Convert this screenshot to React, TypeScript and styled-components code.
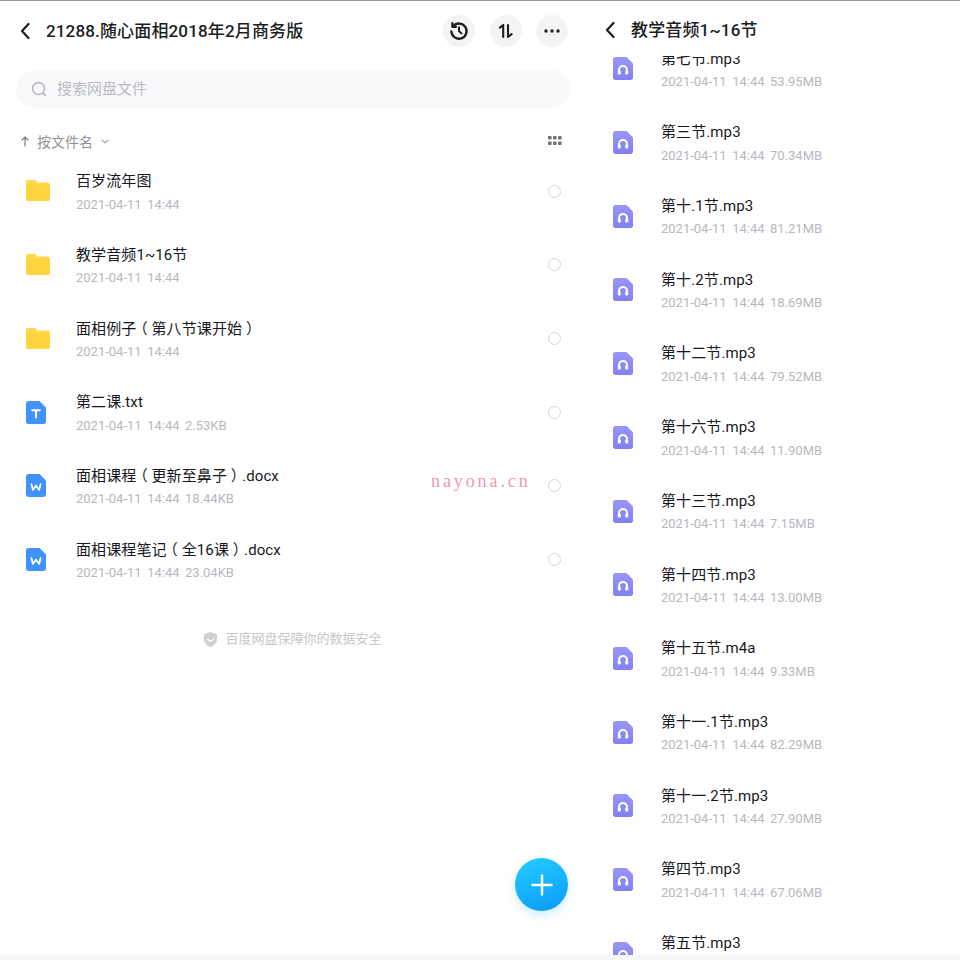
import React from "react";
import styled, { createGlobalStyle } from "styled-components";

const GlobalStyle = createGlobalStyle`
  html, body { margin: 0; padding: 0; background: #fff; }
  * { box-sizing: border-box; }
  body { font-family: Roboto, "Noto Sans CJK SC", sans-serif; color: #16181d; }
`;

type FileItem = { name: string; date?: string; size?: string; kind: "folder" | "txt" | "doc" | "audio" };

const DATE = "2021-04-11";
const TIME = "14:44";

const leftFiles: FileItem[] = [
  { name: "百岁流年图", kind: "folder" },
  { name: "教学音频1~16节", kind: "folder" },
  { name: "面相例子（第八节课开始）", kind: "folder" },
  { name: "第二课.txt", size: "2.53KB", kind: "txt" },
  { name: "面相课程（更新至鼻子）.docx", size: "18.44KB", kind: "doc" },
  { name: "面相课程笔记（全16课）.docx", size: "23.04KB", kind: "doc" },
];

const rightFiles: FileItem[] = [
  { name: "第七节.mp3", size: "53.95MB", kind: "audio" },
  { name: "第三节.mp3", size: "70.34MB", kind: "audio" },
  { name: "第十.1节.mp3", size: "81.21MB", kind: "audio" },
  { name: "第十.2节.mp3", size: "18.69MB", kind: "audio" },
  { name: "第十二节.mp3", size: "79.52MB", kind: "audio" },
  { name: "第十六节.mp3", size: "11.90MB", kind: "audio" },
  { name: "第十三节.mp3", size: "7.15MB", kind: "audio" },
  { name: "第十四节.mp3", size: "13.00MB", kind: "audio" },
  { name: "第十五节.m4a", size: "9.33MB", kind: "audio" },
  { name: "第十一.1节.mp3", size: "82.29MB", kind: "audio" },
  { name: "第十一.2节.mp3", size: "27.90MB", kind: "audio" },
  { name: "第四节.mp3", size: "67.06MB", kind: "audio" },
  { name: "第五节.mp3", size: "", kind: "audio" },
];

function BackIcon() {
  return (
    <svg width="12" height="18" viewBox="0 0 12 18" fill="none">
      <path d="M9.5 2 L3 9 L9.5 16" stroke="#1b1d22" strokeWidth="2.2" strokeLinecap="round" strokeLinejoin="round" />
    </svg>
  );
}

function HistoryIcon() {
  return (
    <svg width="20" height="20" viewBox="0 0 20 20" fill="none" stroke="#1b1d22" strokeWidth="2.3" strokeLinecap="round" strokeLinejoin="round">
      <path d="M4.2 5.2 A7.6 7.6 0 1 1 2.4 10.5" />
      <path d="M3.4 2.2 V5.8 H7" />
      <path d="M10 6.2 V10.2 L12.6 12.4" strokeWidth="2" />
    </svg>
  );
}

function SortIcon() {
  return (
    <svg width="16" height="16" viewBox="0 0 16 16" fill="none" stroke="#1b1d22" strokeWidth="2.1" strokeLinecap="round" strokeLinejoin="round">
      <path d="M1.8 4.6 L5.2 2 V14" />
      <path d="M10 2 V14 L13.6 11.2" />
    </svg>
  );
}

function DotsIcon() {
  return (
    <svg width="16" height="4" viewBox="0 0 16 4" fill="#1b1d22">
      <circle cx="2" cy="2" r="1.7" />
      <circle cx="8" cy="2" r="1.7" />
      <circle cx="14" cy="2" r="1.7" />
    </svg>
  );
}

function SearchIcon() {
  return (
    <svg width="16" height="16" viewBox="0 0 16 16" fill="none" stroke="#b4b7bd" strokeWidth="1.5" strokeLinecap="round">
      <circle cx="7.5" cy="7.5" r="6" />
      <path d="M12 12 L14.6 14.6" />
    </svg>
  );
}

function GridIcon() {
  return (
    <svg width="14" height="10" viewBox="0 0 14 10" fill="#70727c">
      {[0, 5, 10].map((x) =>
        [0, 5.5].map((y) => <rect key={`${x}-${y}`} x={x} y={y} width="3.6" height="3.6" rx="0.8" />),
      )}
    </svg>
  );
}

function FolderIcon() {
  return (
    <svg width="24" height="21" viewBox="0 0 24 21">
      <path d="M2 0 H8 C9.2 0 9.8 .5 10.4 1.2 L11.6 2.6 H21.5 C23 2.6 24 3.6 24 5 V18.5 C24 20 23 21 21.5 21 H2.5 C1 21 0 20 0 18.5 V2 C0 .8 .8 0 2 0 Z" fill="#ffd84d" />
      <path d="M0 4.5 H24 V18.5 C24 20 23 21 21.5 21 H2.5 C1 21 0 20 0 18.5 Z" fill="#ffd53f" />
    </svg>
  );
}

function DocIcon({ kind }: { kind: "txt" | "doc" }) {
  return (
    <svg width="20" height="23" viewBox="0 0 20 23">
      <path d="M2.5 0 H13.5 L20 6.5 V20.5 C20 22 19 23 17.5 23 H2.5 C1 23 0 22 0 20.5 V2.5 C0 1 1 0 2.5 0 Z" fill="#4093fb" />
      {kind === "txt" ? (
        <path d="M6.2 9.2 H13.8 M10 9.2 V16.6" stroke="#fff" strokeWidth="2" strokeLinecap="round" fill="none" />
      ) : (
        <path d="M5.4 10 L6.9 16 L10 11.4 L13.1 16 L14.6 10" stroke="#fff" strokeWidth="1.7" strokeLinecap="round" strokeLinejoin="round" fill="none" />
      )}
    </svg>
  );
}

function AudioIcon() {
  return (
    <svg width="20" height="23" viewBox="0 0 20 23">
      <defs>
        <linearGradient id="audioFill" x1="0" y1="0" x2="0" y2="1">
          <stop offset="0" stopColor="#9a95f7" />
          <stop offset="1" stopColor="#8280f3" />
        </linearGradient>
      </defs>
      <path d="M2.5 0 H13.5 L20 6.5 V20.5 C20 22 19 23 17.5 23 H2.5 C1 23 0 22 0 20.5 V2.5 C0 1 1 0 2.5 0 Z" fill="url(#audioFill)" />
      <path d="M6 16 V13 A4 4 0 0 1 14 13 V16" stroke="#fff" strokeWidth="2" fill="none" />
      <rect x="4.8" y="13.4" width="3" height="4" rx="1" fill="#fff" />
      <rect x="12.2" y="13.4" width="3" height="4" rx="1" fill="#fff" />
    </svg>
  );
}

function ShieldIcon() {
  return (
    <svg width="13" height="15" viewBox="0 0 13 15">
      <path d="M6.5 0 L13 2.2 V7.5 C13 11 10 13.6 6.5 15 C3 13.6 0 11 0 7.5 V2.2 Z" fill="#cfd0d3" />
      <path d="M3.8 7 C4.8 9.6 8.2 9.6 9.2 7" stroke="#fff" strokeWidth="1.4" strokeLinecap="round" fill="none" />
    </svg>
  );
}

function FileIcon({ kind }: { kind: FileItem["kind"] }) {
  if (kind === "folder") return <FolderIcon />;
  if (kind === "audio") return <AudioIcon />;
  return <DocIcon kind={kind} />;
}

// the reference centres its full width brackets in their cell
function NameText({ text }: { text: string }) {
  return (
    <>
      {text.split(/([（）])/).map((part, i) =>
        part === "（" || part === "）" ? <Bracket key={i}>{part}</Bracket> : part,
      )}
    </>
  );
}

function FileRow({ file, selectable }: { file: FileItem; selectable?: boolean }) {
  return (
    <Row>
      <IconCell>
        <FileIcon kind={file.kind} />
      </IconCell>
      <RowText>
        <FileName>
          <NameText text={file.name} />
        </FileName>
        <FileMeta>
          <span>{DATE}</span>
          <span>{TIME}</span>
          {file.size && <span>{file.size}</span>}
        </FileMeta>
      </RowText>
      {selectable && <Radio />}
    </Row>
  );
}

export default function App() {
  return (
    <Screen>
      <GlobalStyle />
      <TopLine />
      <Panels>
        <LeftPanel>
          <LeftHeader>
            <BackButton>
              <BackIcon />
            </BackButton>
            <Title>21288.随心面相2018年2月商务版</Title>
            <HeaderActions>
              <RoundButton>
                <HistoryIcon />
              </RoundButton>
              <RoundButton>
                <SortIcon />
              </RoundButton>
              <RoundButton>
                <DotsIcon />
              </RoundButton>
            </HeaderActions>
          </LeftHeader>
          <SearchBar>
            <SearchIcon />
            <Placeholder>搜索网盘文件</Placeholder>
          </SearchBar>
          <SortBar>
            <SortLabel>
              <SortArrow>
                <svg width="8" height="11" viewBox="0 0 8 11" fill="none" stroke="#7c7e84" strokeWidth="1.2" strokeLinecap="round" strokeLinejoin="round">
                  <path d="M4 10 V1 M1 4 L4 1 L7 4" />
                </svg>
              </SortArrow>
              按文件名
              <Caret viewBox="0 0 8 5" width="8" height="5">
                <path d="M1 1 L4 4 L7 1" stroke="#a6a8ad" strokeWidth="1.1" fill="none" strokeLinecap="round" />
              </Caret>
            </SortLabel>
            <GridIcon />
          </SortBar>
          {leftFiles.map((f) => (
            <FileRow key={f.name} file={f} selectable />
          ))}
          <SafeNote>
            <ShieldIcon />
            百度网盘保障你的数据安全
          </SafeNote>
          <Watermark>nayona.cn</Watermark>
          <Fab>
            <svg width="22" height="22" viewBox="0 0 22 22" stroke="#fff" strokeWidth="2.4" strokeLinecap="round">
              <path d="M11 1.5 V20.5 M1.5 11 H20.5" />
            </svg>
          </Fab>
        </LeftPanel>
        <RightPanel>
          <RightHeader>
            <BackButton>
              <BackIcon />
            </BackButton>
            <Title>教学音频1~16节</Title>
          </RightHeader>
          <ScrollArea>
            <ScrollContent>
              {rightFiles.map((f) => (
                <FileRow key={f.name} file={f} />
              ))}
            </ScrollContent>
          </ScrollArea>
        </RightPanel>
      </Panels>
      <BottomLine />
    </Screen>
  );
}

const Screen = styled.div`
  width: 960px;
  height: 960px;
  display: flex;
  flex-direction: column;
  overflow: hidden;
  background: #fff;
`;

const TopLine = styled.div`
  height: 1px;
  background: #9a9a9a;
`;

const BottomLine = styled.div`
  height: 5px;
  background: #f6f6f6;
`;

const Panels = styled.div`
  flex: 1;
  min-height: 0;
  display: flex;
`;

const LeftPanel = styled.section`
  position: relative;
  width: 585px;
  padding: 0 15px 0 16px;
`;

const RightPanel = styled.section`
  width: 375px;
  display: flex;
  flex-direction: column;
  padding-left: 21px;
`;

const LeftHeader = styled.header`
  height: 59px;
  display: flex;
  align-items: center;
  padding-left: 3px;
`;

const RightHeader = styled.header`
  height: 55px;
  flex: none;
  display: flex;
  align-items: center;
  padding-top: 3px;
  margin-left: -2px;
`;

const BackButton = styled.div`
  width: 27px;
  display: flex;
  align-items: center;
`;

const Title = styled.h1`
  margin: 0;
  font-size: 17px;
  line-height: 24px;
  font-weight: 500;
  letter-spacing: 0.15px;
  color: #1b1d22;
  white-space: nowrap;
`;

const HeaderActions = styled.div`
  margin-left: auto;
  display: flex;
  gap: 14.5px;
  padding-right: 2px;
`;

const RoundButton = styled.div`
  width: 32px;
  height: 32px;
  border-radius: 50%;
  background: #f4f4f5;
  display: flex;
  align-items: center;
  justify-content: center;
`;

const SearchBar = styled.div`
  margin-top: 10px;
  height: 38px;
  border-radius: 19px;
  background: #f9f9fb;
  display: flex;
  align-items: center;
  gap: 10px;
  padding-left: 15px;
`;

const Placeholder = styled.span`
  font-size: 15px;
  line-height: 20px;
  color: #b8bbc2;
`;

const SortBar = styled.div`
  margin-top: 20px;
  height: 28px;
  display: flex;
  align-items: center;
  justify-content: space-between;
  padding: 0 8px 2px 5px;
`;

const SortLabel = styled.div`
  display: flex;
  align-items: center;
  font-size: 14px;
  color: #8f9196;
`;

const SortArrow = styled.span`
  width: 16px;
  display: flex;
`;

const Caret = styled.svg`
  margin-left: 8px;
`;

const Row = styled.div`
  height: 73.72px;
  display: flex;
  align-items: center;
`;

const IconCell = styled.div`
  width: 60px;
  flex: none;
  display: flex;
  padding-left: 10px;
  margin-bottom: 4px;
  ${RightPanel} & {
    width: 55px;
    padding-left: 7px;
    margin-bottom: 3px;
  }
`;

const RowText = styled.div`
  flex: 1;
  min-width: 0;
  display: flex;
  flex-direction: column;
  gap: 4.5px;
  margin-bottom: 1px;
`;

const FileName = styled.div`
  font-size: 15px;
  line-height: 20px;
  letter-spacing: 0.1px;
  color: #16181d;
  white-space: nowrap;
`;

const Bracket = styled.span`
  display: inline-block;
  padding: 0 3.75px;
  font-feature-settings: "halt";
`;

const FileMeta = styled.div`
  display: flex;
  gap: 5.5px;
  font-size: 13px;
  line-height: 18px;
  color: #b6b8be;
  white-space: nowrap;
`;

const Radio = styled.div`
  width: 13px;
  height: 13px;
  flex: none;
  margin: 0 9px 3.5px 0;
  border-radius: 50%;
  border: 1.6px solid #d6d7d9;
`;

const SafeNote = styled.div`
  margin-top: 32px;
  display: flex;
  align-items: center;
  justify-content: center;
  gap: 8px;
  font-size: 13px;
  line-height: 18px;
  color: #c6c7cb;
`;

const Watermark = styled.div`
  position: absolute;
  left: 431px;
  top: 469px;
  font-family: "Liberation Serif", serif;
  font-size: 18px;
  line-height: 22px;
  letter-spacing: 2.9px;
  color: #ec9da8;
`;

const Fab = styled.div`
  position: absolute;
  right: 17px;
  bottom: 44px;
  width: 53px;
  height: 53px;
  border-radius: 50%;
  background: linear-gradient(160deg, #24cdfd, #0a9afa);
  box-shadow: 0 4px 10px rgba(40, 170, 250, 0.22);
  display: flex;
  align-items: center;
  justify-content: center;
`;

const ScrollArea = styled.div`
  flex: 1;
  min-height: 0;
  overflow: hidden;
`;

const ScrollContent = styled.div`
  margin-top: -22.6px;
`;
